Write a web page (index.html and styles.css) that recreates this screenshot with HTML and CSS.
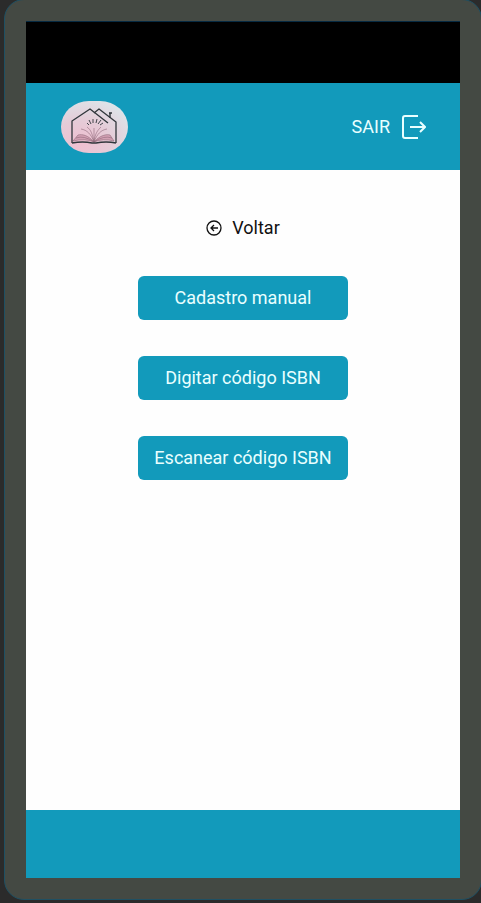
FILE: index.html
```html
<!DOCTYPE html>
<html lang="pt-BR">
<head>
<meta charset="utf-8">
<meta name="viewport" content="width=device-width, initial-scale=1">
<title>Cadastro de livros</title>
<link rel="stylesheet" href="styles.css">
</head>
<body>
<div class="device">
  <div class="status-bar"></div>
  <header class="header">
    <svg class="logo" viewBox="0 0 67 52" aria-hidden="true">
      <defs>
        <radialGradient id="blush" cx="0.3" cy="0.8" r="0.85">
          <stop offset="0" stop-color="#efbfd0"/>
          <stop offset="0.5" stop-color="#e5cbd7"/>
          <stop offset="1" stop-color="#dde3e8"/>
        </radialGradient>
      </defs>
      <rect width="67" height="52" rx="28" ry="26" fill="url(#blush)"/>
      <g fill="#d3a0b3" stroke="#8f6a7b" stroke-width="0.6">
        <path d="M33 41C27 34 21 33 17 34L12 40Q24 37 33 41Z"/>
        <path d="M33 41C39 34 46 33 49 34L53 40Q42 37 33 41Z"/>
        <path d="M33 41C30 33 26 29 20 28M33 41C31 32 30 29 26 26M33 41C36 33 40 29 46 28M33 41C34 32 37 29 40 26M33 41V27M33 41Q23 34 15 37M33 41Q43 34 51 37" fill="none"/>
      </g>
      <g fill="none" stroke="#30363b" stroke-linejoin="round">
        <path d="M11 42V20L29 8L47 22" stroke-width="1.3"/>
        <path d="M33 12L38 8L55 21V42" stroke-width="1.3"/>
        <path d="M11 42Q22 40 31 42H35Q45 40 55 42" stroke-width="1.4"/>
        <path d="M48 12H51M49 12V17" stroke-width="1.4"/>
        <path d="M26 22L28 24M28 19L30 23M32 18V22M36 18L35 22M40 19L37 23M42 22L39 24" stroke-width="0.9"/>
      </g>
    </svg>
    <button class="logout" type="button">
      <span>SAIR</span>
      <svg class="logout-icon" viewBox="0 0 24 24" aria-hidden="true">
        <path d="M16 1H3Q1 1 1 3V21Q1 23 3 23H16M8 12H23M18 7L23 12L18 17"/>
      </svg>
    </button>
  </header>
  <main class="content">
    <a class="back" href="#">
      <svg class="back-icon" viewBox="0 0 16 16" aria-hidden="true">
        <circle cx="8" cy="8" r="7"/>
        <path d="M12 8H5M8 5L5 8L8 11"/>
      </svg>
      <span>Voltar</span>
    </a>
    <button class="option" type="button">Cadastro manual</button>
    <button class="option" type="button">Digitar código ISBN</button>
    <button class="option" type="button">Escanear código ISBN</button>
  </main>
  <footer class="footer"></footer>
</div>
</body>
</html>
```
FILE: styles.css
```css
* {
  box-sizing: border-box;
}

html {
  overflow-x: clip;
  background: #2b2b2b;
}

body {
  margin: 0;
  padding: 0 0 3px 4px;
  font-family: Roboto, sans-serif;
  font-size: 18px;
  line-height: 24px;
}

/* The bezel's outline runs off the top and right edges of the window. */
.device {
  display: flex;
  flex-direction: column;
  min-height: calc(100vh - 2px);
  margin: -1px -1px 0 0;
  padding: 21px;
  background: #444943;
  border: 1px solid #1f5063;
  border-radius: 20px;
}

.status-bar {
  height: 62px;
  background: #000;
  border-top: 1px solid #062a42;
}

.header {
  display: flex;
  align-items: center;
  justify-content: space-between;
  height: 87px;
  padding: 0 34px 0 35px;
  background: #129abb;
}

.logo {
  width: 67px;
  height: 52px;
}

.logout {
  display: flex;
  align-items: center;
  gap: 12px;
  padding: 0;
  border: 0;
  background: none;
  color: #e9ffff;
  font: inherit;
}

.logout-icon {
  width: 24px;
  height: 24px;
  fill: none;
  stroke: currentColor;
  stroke-width: 2;
}

.content {
  display: flex;
  flex: 1;
  flex-direction: column;
  align-items: center;
  gap: 36px;
  padding: 46px 16px;
  background: #fefefe;
}

.back {
  display: flex;
  align-items: center;
  gap: 10px;
  color: #111;
  text-decoration: none;
}

.back-icon {
  width: 16px;
  height: 16px;
  fill: none;
  stroke: currentColor;
  stroke-width: 1.3;
}

.option {
  width: 210px;
  height: 44px;
  padding: 0;
  border: 0;
  border-radius: 6px;
  background: #129abb;
  color: #e9ffff;
  font: inherit;
}

.footer {
  height: 68px;
  background: #129abb;
}
```
